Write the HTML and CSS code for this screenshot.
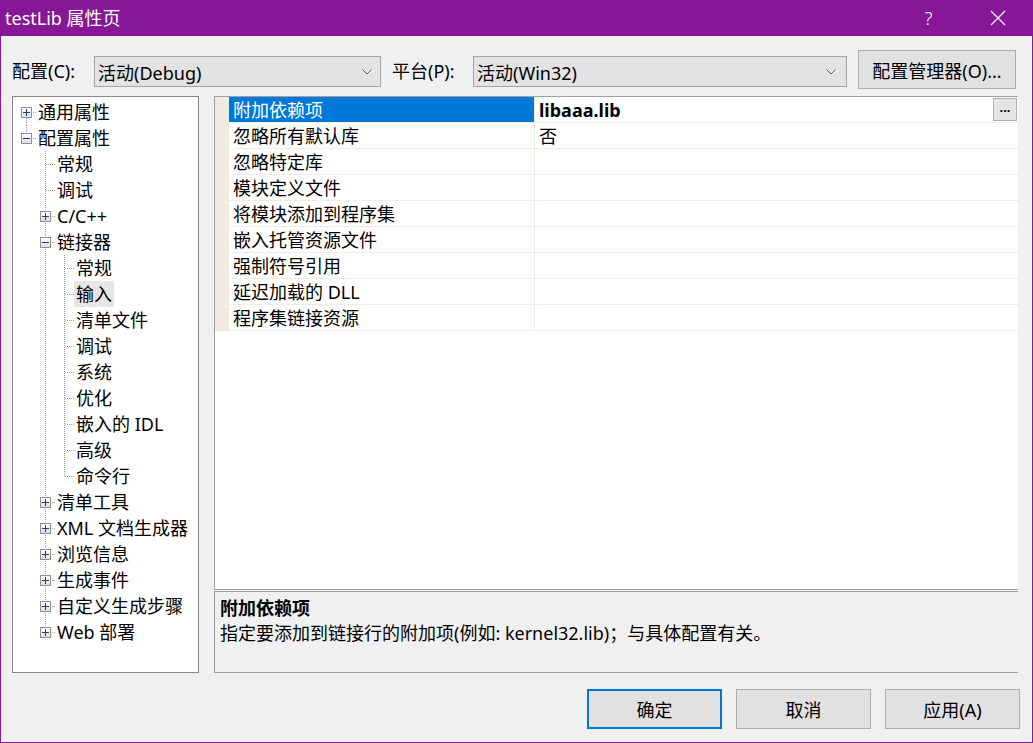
FILE: index.html
```
<!DOCTYPE html>
<html lang="zh-CN">
<head>
    <meta charset="UTF-8">
    <title>testLib 属性页</title>
    <link rel="stylesheet" href="styles.css">
</head>
<body>
<div class="window">
    <div class="titlebar">
        <span class="title">testLib 属性页</span>
        <div class="caption">
            <span class="cap-btn help">?</span>
            <span class="cap-btn">
                <svg width="16" height="16" viewBox="0 0 16 16"><path d="M1 1L15 15M15 1L1 15" stroke="#fff" stroke-width="1.2"/></svg>
            </span>
        </div>
    </div>

    <div class="toolbar">
        <label class="field-label first">配置(C):</label>
        <div class="combo combo-config">
            <span>活动(Debug)</span>
            <svg width="10" height="6" viewBox="0 0 10 6"><path d="M0.5 0.5L5 5L9.5 0.5" fill="none" stroke="#606060"/></svg>
        </div>
        <label class="field-label second">平台(P):</label>
        <div class="combo combo-platform">
            <span>活动(Win32)</span>
            <svg width="10" height="6" viewBox="0 0 10 6"><path d="M0.5 0.5L5 5L9.5 0.5" fill="none" stroke="#606060"/></svg>
        </div>
        <button class="btn manager">配置管理器(O)...</button>
    </div>

    <div class="main">
        <div class="tree">
            <div class="node"><span class="conn first"><span class="exp plus"></span></span><span class="label">通用属性</span></div>
            <div class="node"><span class="conn last"><span class="exp minus"></span></span><span class="label">配置属性</span></div>
            <div class="node"><span class="guide"></span><span class="conn"></span><span class="label">常规</span></div>
            <div class="node"><span class="guide"></span><span class="conn"></span><span class="label">调试</span></div>
            <div class="node"><span class="guide"></span><span class="conn"><span class="exp plus"></span></span><span class="label">C/C++</span></div>
            <div class="node"><span class="guide"></span><span class="conn"><span class="exp minus"></span></span><span class="label">链接器</span></div>
            <div class="node"><span class="guide"></span><span class="guide line"></span><span class="conn"></span><span class="label">常规</span></div>
            <div class="node"><span class="guide"></span><span class="guide line"></span><span class="conn"></span><span class="label selected">输入</span></div>
            <div class="node"><span class="guide"></span><span class="guide line"></span><span class="conn"></span><span class="label">清单文件</span></div>
            <div class="node"><span class="guide"></span><span class="guide line"></span><span class="conn"></span><span class="label">调试</span></div>
            <div class="node"><span class="guide"></span><span class="guide line"></span><span class="conn"></span><span class="label">系统</span></div>
            <div class="node"><span class="guide"></span><span class="guide line"></span><span class="conn"></span><span class="label">优化</span></div>
            <div class="node"><span class="guide"></span><span class="guide line"></span><span class="conn"></span><span class="label">嵌入的 IDL</span></div>
            <div class="node"><span class="guide"></span><span class="guide line"></span><span class="conn"></span><span class="label">高级</span></div>
            <div class="node"><span class="guide"></span><span class="guide line"></span><span class="conn last"></span><span class="label">命令行</span></div>
            <div class="node"><span class="guide"></span><span class="conn"><span class="exp plus"></span></span><span class="label">清单工具</span></div>
            <div class="node"><span class="guide"></span><span class="conn"><span class="exp plus"></span></span><span class="label">XML 文档生成器</span></div>
            <div class="node"><span class="guide"></span><span class="conn"><span class="exp plus"></span></span><span class="label">浏览信息</span></div>
            <div class="node"><span class="guide"></span><span class="conn"><span class="exp plus"></span></span><span class="label">生成事件</span></div>
            <div class="node"><span class="guide"></span><span class="conn"><span class="exp plus"></span></span><span class="label">自定义生成步骤</span></div>
            <div class="node"><span class="guide"></span><span class="conn last"><span class="exp plus"></span></span><span class="label">Web 部署</span></div>
        </div>

        <div class="right">
            <div class="grid">
                <div class="row active">
                    <span class="margin"></span>
                    <span class="name">附加依赖项</span>
                    <span class="value"><b>libaaa.lib</b><button class="dots">...</button></span>
                </div>
                <div class="row"><span class="margin"></span><span class="name">忽略所有默认库</span><span class="value">否</span></div>
                <div class="row"><span class="margin"></span><span class="name">忽略特定库</span><span class="value"></span></div>
                <div class="row"><span class="margin"></span><span class="name">模块定义文件</span><span class="value"></span></div>
                <div class="row"><span class="margin"></span><span class="name">将模块添加到程序集</span><span class="value"></span></div>
                <div class="row"><span class="margin"></span><span class="name">嵌入托管资源文件</span><span class="value"></span></div>
                <div class="row"><span class="margin"></span><span class="name">强制符号引用</span><span class="value"></span></div>
                <div class="row"><span class="margin"></span><span class="name">延迟加载的 DLL</span><span class="value"></span></div>
                <div class="row"><span class="margin"></span><span class="name">程序集链接资源</span><span class="value"></span></div>
            </div>
            <div class="desc">
                <div class="desc-title">附加依赖项</div>
                <div class="desc-text">指定要添加到链接行的附加项(例如: kernel32.lib)；与具体配置有关。</div>
            </div>
        </div>
    </div>

    <div class="footer">
        <button class="btn action default">确定</button>
        <button class="btn action">取消</button>
        <button class="btn action">应用(A)</button>
    </div>
</div>
</body>
</html>
```

FILE: styles.css
```
:root {
    --dot-v: repeating-linear-gradient(to bottom, #a0a0a0 0 1px, transparent 1px 2px);
    --dot-h: repeating-linear-gradient(to right, #a0a0a0 0 1px, transparent 1px 2px);
}
body {
    margin: 0;
    font-family: "Noto Sans", "Noto Sans CJK SC", sans-serif;
    font-size: 18px;
    color: #000;
}
.window {
    box-sizing: border-box;
    width: 1033px;
    height: 743px;
    display: flex;
    flex-direction: column;
    background-color: #f0f0f0;
    border: 1px solid #881798;
    border-top: none;
}

/* title bar */
.titlebar {
    height: 36px;
    flex: none;
    display: flex;
    align-items: center;
    justify-content: space-between;
    background-color: #881798;
    color: #fff;
    padding-left: 4px;
}
.title {
    line-height: 36px;
}
.caption {
    display: flex;
    height: 36px;
}
.cap-btn {
    width: 69px;
    display: flex;
    align-items: center;
    justify-content: center;
}
.help {
    font-size: 19px;
    font-weight: 300;
}

/* config row */
.toolbar {
    display: flex;
    align-items: flex-start;
    padding: 14px 0 0 11px;
    height: 39px;
    flex: none;
}
.field-label {
    height: 31px;
    line-height: 31px;
    margin-top: 6px;
}
.field-label.first {
    width: 82px;
}
.field-label.second {
    width: 81px;
    margin-left: 11px;
}
.combo {
    box-sizing: border-box;
    height: 31px;
    margin-top: 6px;
    display: flex;
    align-items: center;
    justify-content: space-between;
    padding: 0 8px 0 3px;
    background-color: #e3e3e3;
    border: 1px solid #a5a5a5;
}
.combo-config {
    width: 287px;
}
.combo-platform {
    width: 374px;
    padding-right: 10px;
}
.btn {
    box-sizing: border-box;
    font-family: inherit;
    font-size: 18px;
    color: #000;
    background-color: #e1e1e1;
    border: 1px solid #adadad;
    padding: 0;
}
.manager {
    width: 158px;
    height: 39px;
    margin-left: 11px;
}

/* main area */
.main {
    display: flex;
    padding: 7px 14px 0 11px;
    height: 577px;
    flex: none;
}
.tree {
    box-sizing: border-box;
    width: 187px;
    height: 577px;
    background-color: #fff;
    border: 1px solid #828790;
    padding: 2px 0 0 4px;
}
.node {
    display: flex;
    height: 26px;
    line-height: 26px;
    white-space: nowrap;
}
.guide {
    width: 19px;
    flex: none;
}
.guide.line {
    background-image: var(--dot-v);
    background-repeat: no-repeat;
    background-position: 9px 0;
    background-size: 1px 100%;
}
.conn {
    width: 19px;
    flex: none;
    display: flex;
    align-items: center;
    background-image: var(--dot-h), var(--dot-v);
    background-repeat: no-repeat;
    background-position: 10px 13px, 9px 0;
    background-size: 9px 1px, 1px 100%;
}
.conn.last {
    background-size: 9px 1px, 1px 13px;
}
.conn.first {
    background-position: 10px 13px, 9px 13px;
    background-size: 9px 1px, 1px 13px;
}
.exp {
    box-sizing: border-box;
    width: 11px;
    height: 11px;
    margin-left: 4px;
    border: 1px solid #8f8f8f;
    background-color: #f4f4f4;
    background-repeat: no-repeat;
}
.exp.plus {
    background-image: linear-gradient(#1f3f86, #1f3f86), linear-gradient(#1f3f86, #1f3f86), linear-gradient(#ffffff, #dedede);
    background-size: 7px 1px, 1px 7px, 100% 100%;
    background-position: center, center, 0 0;
}
.exp.minus {
    background-image: linear-gradient(#1f3f86, #1f3f86), linear-gradient(#ffffff, #dedede);
    background-size: 7px 1px, 100% 100%;
    background-position: center, 0 0;
}
.label {
    padding: 0 2px;
}
.label.selected {
    background-color: #e6e6e6;
}

.right {
    flex: 1;
    margin-left: 15px;
    display: flex;
    flex-direction: column;
}
.grid {
    box-sizing: border-box;
    height: 494px;
    background-color: #fff;
    border-top: 1px solid #a0a0a0;
    border-left: 1px solid #a0a0a0;
    border-bottom: 1px solid #a0a0a0;
}
.row {
    display: flex;
    height: 26px;
    line-height: 23px;
}
.row .margin {
    width: 14px;
    flex: none;
    background-color: #efebde;
}
.row .name {
    width: 306px;
    flex: none;
    box-sizing: border-box;
    padding: 2px 0 0 4px;
    border-right: 1px solid #f0ede3;
    border-bottom: 1px solid #f0ede3;
}
.row .value {
    flex: 1;
    display: flex;
    align-items: center;
    justify-content: space-between;
    padding: 2px 0 0 4px;
    border-bottom: 1px solid #f0ede3;
}
.row.active .name {
    background-color: #0078d7;
    color: #fff;
}
.dots {
    box-sizing: border-box;
    width: 24px;
    height: 23px;
    margin: -2px 1px 0 0;
    padding: 0 0 6px 0;
    font-family: inherit;
    font-size: 13px;
    font-weight: bold;
    line-height: 12px;
    background-color: #e5e5e5;
    border: 1px solid #adadad;
}
.desc {
    box-sizing: border-box;
    height: 82px;
    margin-top: 1px;
    border: 1px solid #a0a0a0;
    border-right: none;
    padding: 4px 0 0 5px;
    line-height: 25px;
}
.desc-title {
    font-weight: bold;
}

/* bottom buttons */
.footer {
    display: flex;
    justify-content: flex-end;
    gap: 14px;
    padding: 16px 12px 0 0;
}
.action {
    width: 135px;
    height: 40px;
}
.action.default {
    border: 2px solid #0078d7;
}
```
